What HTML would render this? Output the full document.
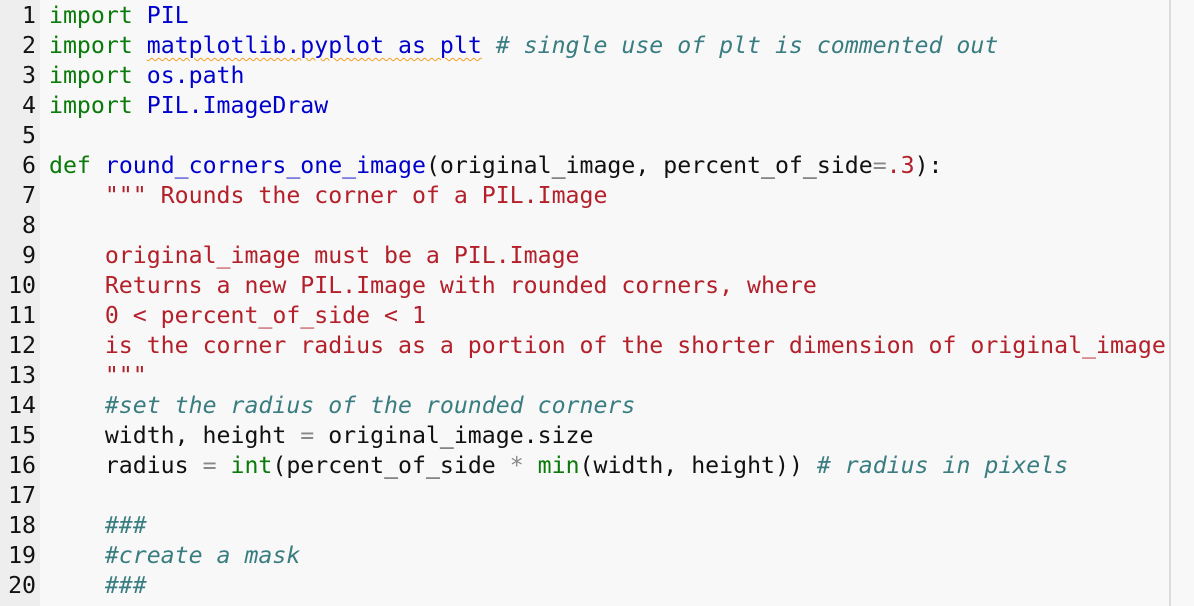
<!DOCTYPE html>
<html><head><meta charset="utf-8"><style>
html,body{margin:0;padding:0;width:1194px;height:606px;overflow:hidden;background:#f8f8f8}
.g{position:absolute;left:0;top:0;width:40px;height:606px;background:#eeeeee}
.vl{position:absolute;left:1169px;top:0;width:2px;height:606px;background:#dcdcdc}
.c{position:absolute;left:0;top:1px;font-family:"DejaVu Sans Mono","Liberation Mono",monospace;font-size:23.2px;line-height:30px;color:#111;white-space:nowrap}
.l{height:30px;white-space:pre}
.n{display:inline-block;width:36px;text-align:right;margin-right:13px;color:#111}
.k{color:#0a7a0a}.b{color:#0000cc}.s{color:#b3202a}.m{color:#3a7d80;font-style:italic}.o{color:#888}
.u{text-decoration:underline wavy #f0a020;text-decoration-thickness:1px;text-underline-offset:4px}
</style></head><body>
<div class="g"></div><div class="vl"></div>
<div class="c"><div class="l"><span class="n">1</span><span class="k">import</span> <span class="b">PIL</span></div><div class="l"><span class="n">2</span><span class="k">import</span> <span class="b u">matplotlib.pyplot as plt</span> <span class="m"># single use of plt is commented out</span></div><div class="l"><span class="n">3</span><span class="k">import</span> <span class="b">os.path</span></div><div class="l"><span class="n">4</span><span class="k">import</span> <span class="b">PIL.ImageDraw</span></div><div class="l"><span class="n">5</span></div><div class="l"><span class="n">6</span><span class="k">def</span> <span class="b">round_corners_one_image</span>(original_image, percent_of_side<span class="o">=</span><span class="s">.3</span>):</div><div class="l"><span class="n">7</span>    <span class="s">""" Rounds the corner of a PIL.Image</span></div><div class="l"><span class="n">8</span></div><div class="l"><span class="n">9</span>    <span class="s">original_image must be a PIL.Image</span></div><div class="l"><span class="n">10</span>    <span class="s">Returns a new PIL.Image with rounded corners, where</span></div><div class="l"><span class="n">11</span>    <span class="s">0 &lt; percent_of_side &lt; 1</span></div><div class="l"><span class="n">12</span>    <span class="s">is the corner radius as a portion of the shorter dimension of original_image</span></div><div class="l"><span class="n">13</span>    <span class="s">"""</span></div><div class="l"><span class="n">14</span>    <span class="m">#set the radius of the rounded corners</span></div><div class="l"><span class="n">15</span>    width, height <span class="o">=</span> original_image.size</div><div class="l"><span class="n">16</span>    radius <span class="o">=</span> <span class="k">int</span>(percent_of_side <span class="o">*</span> <span class="k">min</span>(width, height)) <span class="m"># radius in pixels</span></div><div class="l"><span class="n">17</span></div><div class="l"><span class="n">18</span>    <span class="m">###</span></div><div class="l"><span class="n">19</span>    <span class="m">#create a mask</span></div><div class="l"><span class="n">20</span>    <span class="m">###</span></div></div>
</body></html>
